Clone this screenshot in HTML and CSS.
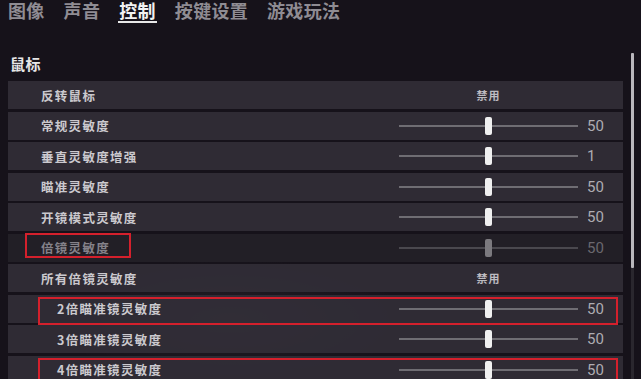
FILE: index.html
```html
<!DOCTYPE html>
<html lang="zh">
<head>
<meta charset="utf-8">
<link rel="stylesheet" href="styles.css">
</head>
<body>
<div class="screen">
  <nav class="tabs">
    <span class="tab">图像</span>
    <span class="tab">声音</span>
    <span class="tab active">控制</span>
    <span class="tab">按键设置</span>
    <span class="tab">游戏玩法</span>
  </nav>
  <h2 class="heading">鼠标</h2>
  <div class="rows">
    <div class="row">
      <span class="label">反转鼠标</span>
      <span class="toggle">禁用</span>
      <span class="value"></span>
    </div>
    <div class="row">
      <span class="label">常规灵敏度</span>
      <span class="slider"><i class="track"></i><b class="thumb"></b><i class="track"></i></span>
      <span class="value">50</span>
    </div>
    <div class="row">
      <span class="label">垂直灵敏度增强</span>
      <span class="slider"><i class="track"></i><b class="thumb"></b><i class="track"></i></span>
      <span class="value">1</span>
    </div>
    <div class="row">
      <span class="label">瞄准灵敏度</span>
      <span class="slider"><i class="track"></i><b class="thumb"></b><i class="track"></i></span>
      <span class="value">50</span>
    </div>
    <div class="row">
      <span class="label">开镜模式灵敏度</span>
      <span class="slider"><i class="track"></i><b class="thumb"></b><i class="track"></i></span>
      <span class="value">50</span>
    </div>
    <div class="row disabled">
      <span class="label">倍镜灵敏度</span>
      <span class="slider"><i class="track"></i><b class="thumb"></b><i class="track"></i></span>
      <span class="value">50</span>
      <span class="mark mark-label"></span>
    </div>
    <div class="row">
      <span class="label">所有倍镜灵敏度</span>
      <span class="toggle">禁用</span>
      <span class="value"></span>
    </div>
    <div class="row sub">
      <span class="label">2倍瞄准镜灵敏度</span>
      <span class="slider"><i class="track"></i><b class="thumb"></b><i class="track"></i></span>
      <span class="value">50</span>
      <span class="mark mark-row"></span>
    </div>
    <div class="row sub">
      <span class="label">3倍瞄准镜灵敏度</span>
      <span class="slider"><i class="track"></i><b class="thumb"></b><i class="track"></i></span>
      <span class="value">50</span>
    </div>
    <div class="row sub">
      <span class="label">4倍瞄准镜灵敏度</span>
      <span class="slider"><i class="track"></i><b class="thumb"></b><i class="track"></i></span>
      <span class="value">50</span>
      <span class="mark mark-row"></span>
    </div>
  </div>
  <div class="scrollbar"><div class="scroll-thumb"></div></div>
</div>
</body>
</html>
```
FILE: styles.css
```css
html, body {
  margin: 0;
  padding: 0;
}
body {
  width: 641px;
  height: 379px;
  overflow: hidden;
  background: #16121a;
  font-family: "Noto Sans CJK SC", "Noto Sans", sans-serif;
}
.screen {
  position: relative;
  width: 641px;
  height: 379px;
  overflow: hidden;
  background:
    radial-gradient(ellipse 260px 90px at 230px 320px, rgba(255,255,255,0.05), rgba(255,255,255,0) 70%),
    #16121a;
}
.tabs {
  display: flex;
  gap: 19px;
  padding-left: 8px;
  padding-top: 1px;
  height: 23px;
}
.tab {
  font-size: 18px;
  font-weight: 700;
  line-height: 19px;
  color: #8f8c93;
  letter-spacing: 0.3px;
  padding: 0 1px 1px;
  margin: 0 -1px;
  border-bottom: 2px solid transparent;
  height: 19px;
}
.tab.active {
  color: #f2f2f2;
  border-bottom-color: #e8e8e8;
}
.heading {
  margin: 31px 0 0 10px;
  font-size: 15px;
  line-height: 18px;
  font-weight: 700;
  color: #e6e6e6;
  letter-spacing: 0.5px;
}
.rows {
  margin: 8px 18px 0 8px;
  display: flex;
  flex-direction: column;
  gap: 2.5px;
}
.row {
  position: relative;
  height: 28px;
  display: grid;
  grid-template-columns: 391px 179px 1fr;
  align-items: center;
  background: rgba(52, 49, 58, 0.82);
}
.row.disabled {
  background: rgba(36, 33, 40, 0.9);
}
.label {
  padding-left: 33px;
  font-size: 12.5px;
  font-weight: 700;
  letter-spacing: 1.3px;
  color: #cbc9ce;
  white-space: nowrap;
}
.row.sub .label {
  padding-left: 49px;
}
.row.disabled .label {
  color: #85828a;
}
.toggle {
  text-align: center;
  font-size: 11px;
  font-weight: 700;
  color: #bdbbc0;
  letter-spacing: 1px;
}
.slider {
  display: flex;
  align-items: center;
  height: 18px;
}
.track {
  flex: 1;
  height: 2px;
  background: #6f6d73;
}
.thumb {
  width: 7px;
  height: 18px;
  border-radius: 2px;
  background: #f0f0f0;
}
.row.disabled .track {
  background: #4a484e;
}
.row.disabled .thumb {
  background: #7c7a7f;
}
.value {
  padding-left: 9px;
  font-family: Roboto, "Noto Sans", sans-serif;
  font-size: 15px;
  color: #aeacb2;
}
.row.disabled .value {
  color: #6a686e;
}
.mark {
  position: absolute;
  border: 2px solid #d4202c;
  box-sizing: border-box;
}
.mark-label {
  left: 17px;
  top: -1px;
  width: 106px;
  height: 25px;
}
.mark-row {
  left: 30px;
  right: 5px;
  top: 2px;
  height: 28px;
}
.scrollbar {
  position: absolute;
  left: 631px;
  top: 53px;
  width: 3px;
  bottom: 0;
  background: #2a272e;
}
.scroll-thumb {
  height: 215px;
  background: #b9b7bc;
  border-radius: 1px;
}
```
